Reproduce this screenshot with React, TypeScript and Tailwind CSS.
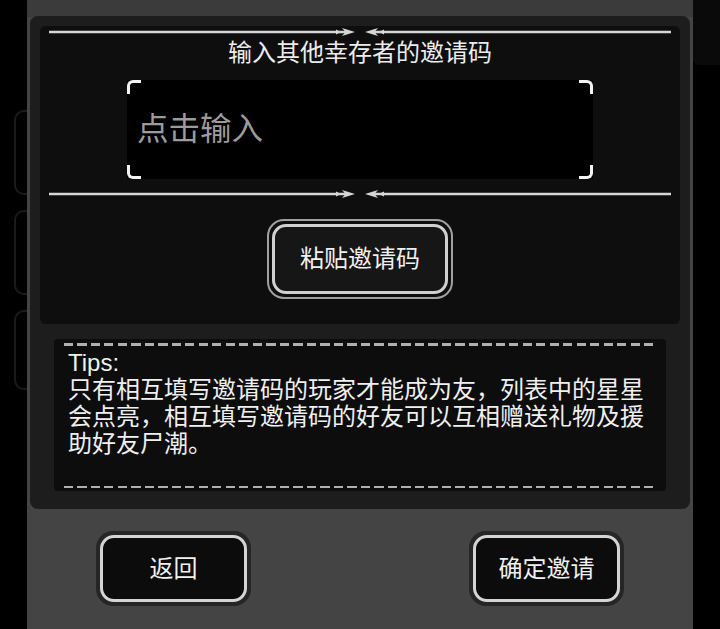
import React from 'react';

const FONT = "font-['Liberation_Sans','Noto_Sans_CJK_SC',sans-serif]";

// divider with two small arrows meeting in the middle
const ArrowLine: React.FC = () => (
  <svg width="622" height="10" viewBox="0 0 622 10" className="block mx-auto">
    <line x1="0" y1="5" x2="297" y2="5" stroke="#d6d6d6" strokeWidth="2.4" />
    <polygon points="287,2.5 292,5 287,7.5" fill="#d6d6d6" />
    <polygon points="293,1 306,5 293,9 296.5,5" fill="#d6d6d6" />
    <line x1="325" y1="5" x2="622" y2="5" stroke="#d6d6d6" strokeWidth="2.4" />
    <polygon points="335,2.5 330,5 335,7.5" fill="#d6d6d6" />
    <polygon points="329,1 316,5 329,9 325.5,5" fill="#d6d6d6" />
  </svg>
);

const Corner: React.FC<{ pos: string }> = ({ pos }) => (
  <div className={`absolute w-[14px] h-[14px] border-[#f2f2f2] ${pos}`} />
);

const DialogButton: React.FC<{ label: string }> = ({ label }) => (
  <div className="w-[155px] h-[75px] rounded-[17px] bg-[#262626] p-[4px]">
    <div className="w-full h-full rounded-[14px] border-[3px] border-[#d4d4d4] bg-[#0c0c0c] flex items-center justify-center">
      <span className="text-[24px] text-[#f0f0f0] leading-none">{label}</span>
    </div>
  </div>
);

const Dashes: React.FC<{ className?: string }> = ({ className }) => (
  <div
    className={`h-[2.5px] mx-[10px] bg-[repeating-linear-gradient(90deg,#b0b0b0_0_9px,transparent_9px_13.5px)] ${className ?? ''}`}
  />
);

export default function App() {
  return (
    <div className={`w-[720px] h-[629px] bg-black overflow-hidden flex ${FONT}`}>
      {/* background cards peeking on the left */}
      <div className="w-[27px] shrink-0 overflow-hidden flex flex-col gap-[15px] pt-[110px] pl-[14px]">
        <div className="w-[30px] h-[85px] shrink-0 rounded-[10px] border-2 border-[#1a1a1a]" />
        <div className="w-[30px] h-[85px] shrink-0 rounded-[10px] border-2 border-[#1a1a1a]" />
        <div className="w-[30px] h-[80px] shrink-0 rounded-[10px] border-2 border-[#1a1a1a]" />
      </div>

      {/* dialog */}
      <div className="w-[666px] shrink-0 bg-[#444444] flex flex-col">
        <div className="h-[17px] bg-[#3b3b3b]" />
        <div className="mx-[3px] -mt-px rounded-[8px] bg-[#1d1d1d] px-[10px] pt-[10px] pb-[18px]">
          <div className="rounded-[6px] bg-[#0e0e0e] pt-px pb-[25px] flex flex-col">
            <ArrowLine />
            <div className="mt-[1px] h-[30px] text-center text-[24px] leading-[30px] text-[#ececec]">
              输入其他幸存者的邀请码
            </div>
            <div className="relative mt-[12px] mx-auto w-[466px] h-[99px] bg-black flex items-center pl-[10px]">
              <span className="text-[31.5px] text-[#9c9c9c] leading-none">点击输入</span>
              <Corner pos="top-0 left-0 border-t-[3px] border-l-[3px] rounded-tl-[6px]" />
              <Corner pos="top-0 right-0 border-t-[3px] border-r-[3px] rounded-tr-[6px]" />
              <Corner pos="bottom-0 left-0 border-b-[3px] border-l-[3px] rounded-bl-[6px]" />
              <Corner pos="bottom-0 right-0 border-b-[3px] border-r-[3px] rounded-br-[6px]" />
            </div>
            <div className="mt-[10px]">
              <ArrowLine />
            </div>
            <div className="mt-[20px] mx-auto w-[186px] h-[80px] rounded-[17px] border-2 border-[#a0a0a0] p-[3px]">
              <div className="w-full h-full rounded-[14px] border-[3px] border-[#d0d0d0] bg-[#161616] flex items-center justify-center">
                <span className="text-[24px] text-[#f0f0f0] leading-none">粘贴邀请码</span>
              </div>
            </div>
          </div>

          <div className="mt-[15px] mx-[14px] h-[152px] rounded-[4px] bg-[#0d0d0d] flex flex-col">
            <Dashes className="mt-[4px]" />
            <div className="mt-[3px] pl-[14px] pr-[8px] text-[24px] leading-[27px] text-[#f0f0f0]">
              Tips:
              <br />
              只有相互填写邀请码的玩家才能成为友，列表中的星星会点亮，相互填写邀请码的好友可以互相赠送礼物及援助好友尸潮。
            </div>
            <Dashes className="mt-auto mb-[3px]" />
          </div>
        </div>

        <div className="pt-[22px] px-[69px] flex justify-between">
          <DialogButton label="返回" />
          <DialogButton label="确定邀请" />
        </div>
      </div>

      {/* right edge */}
      <div className="flex-1 flex flex-col">
        <div className="h-[65px] bg-[#0a0a0a] rounded-bl-[6px]" />
      </div>
    </div>
  );
}
